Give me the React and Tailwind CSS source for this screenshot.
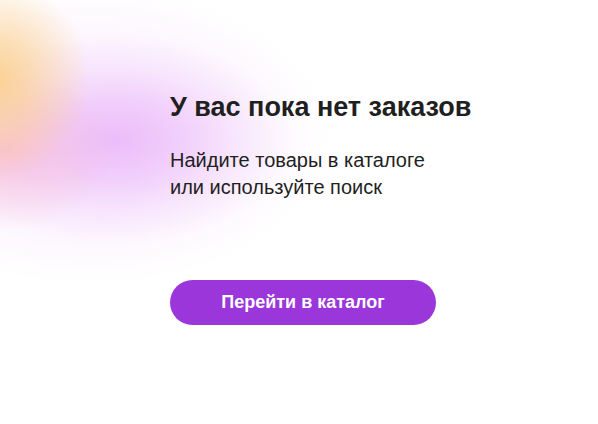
export default function App() {
  return (
    <div className="w-[598px] h-[424px] overflow-hidden bg-white font-['Liberation_Sans',Arial,sans-serif] bg-[image:radial-gradient(ellipse_95px_100px_at_-5px_78px,rgba(251,208,140,0.95)_0%,rgba(251,208,140,0.6)_40%,rgba(251,208,140,0)_100%),radial-gradient(ellipse_110px_80px_at_5px_150px,rgba(247,184,210,0.8)_0%,rgba(247,184,210,0.4)_45%,rgba(247,184,210,0)_100%),radial-gradient(ellipse_180px_105px_at_115px_140px,rgba(235,186,250,0.95)_0%,rgba(235,186,250,0.65)_35%,rgba(235,186,250,0.25)_68%,rgba(235,186,250,0)_100%),radial-gradient(ellipse_240px_150px_at_90px_135px,rgba(250,238,253,1)_0%,rgba(250,238,253,0.6)_60%,rgba(250,238,253,0)_100%)]">
      <div className="flex flex-col pl-[170px] pt-[92px]">
        <h1 className="text-[27px] leading-[30px] font-bold text-[#1f1f1f]">
          У вас пока нет заказов
        </h1>
        <p className="mt-[25px] text-[20px] leading-[27px] text-[#1f1f1f]">
          Найдите товары в каталоге
          <br />
          или используйте поиск
        </p>
        <button className="mt-[79px] w-[266px] h-[45px] rounded-full bg-[#9b36da] text-white text-[18px] font-bold">
          Перейти в каталог
        </button>
      </div>
    </div>
  );
}
